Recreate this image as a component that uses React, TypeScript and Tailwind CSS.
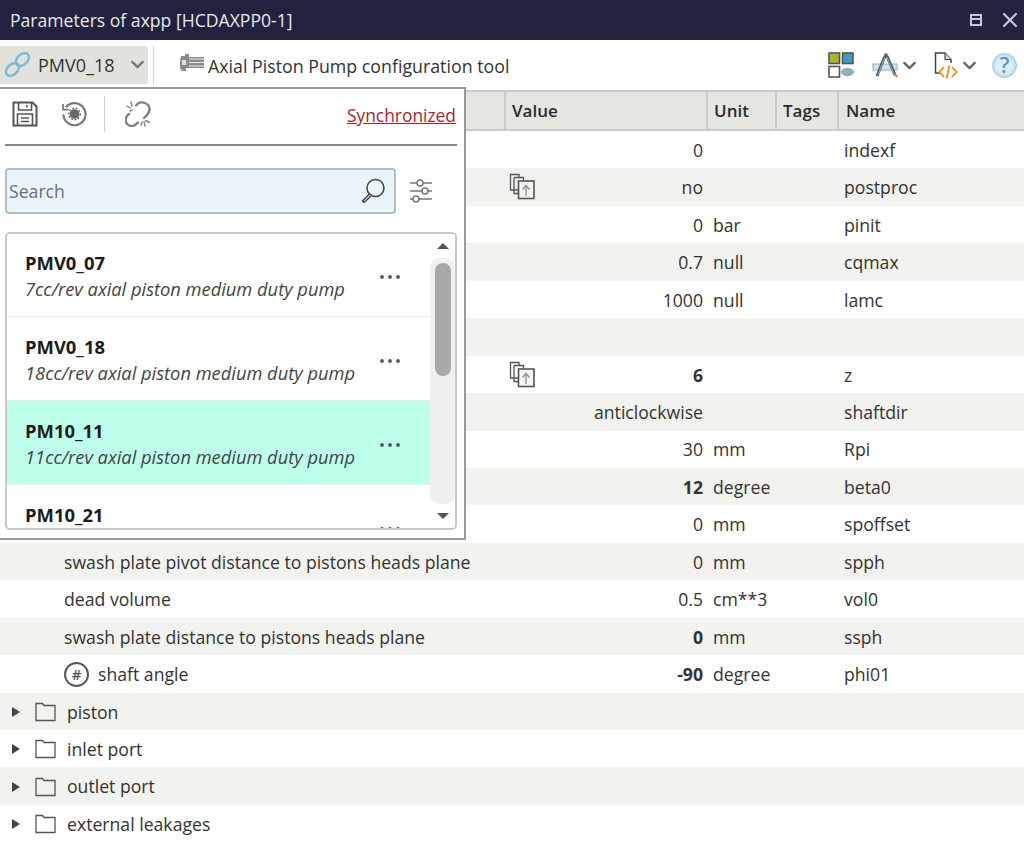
import React from "react";
import { ChevronDown, X } from "lucide-react";

const F = "font-['Open_Sans','Noto_Sans',sans-serif]";

type R = { label?: string; indent?: boolean; folder?: boolean; hash?: boolean; value?: string; bold?: boolean; unit?: string; name?: string; copy?: boolean };

const rows: R[] = [
  { value: "0", name: "indexf" },
  { value: "no", name: "postproc", copy: true },
  { value: "0", unit: "bar", name: "pinit" },
  { value: "0.7", unit: "null", name: "cqmax" },
  { value: "1000", unit: "null", name: "lamc" },
  {},
  { value: "6", bold: true, name: "z", copy: true },
  { value: "anticlockwise", name: "shaftdir" },
  { value: "30", unit: "mm", name: "Rpi" },
  { value: "12", bold: true, unit: "degree", name: "beta0" },
  { value: "0", unit: "mm", name: "spoffset" },
  { label: "swash plate pivot distance to pistons heads plane", indent: true, value: "0", unit: "mm", name: "spph" },
  { label: "dead volume", indent: true, value: "0.5", unit: "cm**3", name: "vol0" },
  { label: "swash plate distance to pistons heads plane", indent: true, value: "0", bold: true, unit: "mm", name: "ssph" },
  { label: "shaft angle", hash: true, value: "-90", bold: true, unit: "degree", name: "phi01" },
  { label: "piston", folder: true },
  { label: "inlet port", folder: true },
  { label: "outlet port", folder: true },
  { label: "external leakages", folder: true },
];

const CopyIcon = () => (
  <svg width="27" height="27" viewBox="0 0 27 27" fill="none" stroke="#555" strokeWidth="1.3">
    <path d="M9 17H1.5V1.5H10V4" />
    <path d="M5 4.5H14.5V8" />
    <path d="M5 4.5V20.5H9" />
    <rect x="9.5" y="8" width="15.5" height="17.5" fill="#f4f4f2" strokeWidth="1.6" />
    <path d="M17 23V13M13.5 16.5L17 12.5L20.5 16.5" stroke="#999" strokeWidth="1.5" />
  </svg>
);

const Folder = () => (
  <svg width="21" height="20" viewBox="0 0 21 20" fill="none" stroke="#555" strokeWidth="1.3" className="shrink-0">
    <path d="M1 18.5V1.5H7.5L9 3.5H20V18.5Z" />
  </svg>
);

const Dots = () => (
  <svg width="22" height="6" viewBox="0 0 22 6" fill="#555">
    <circle cx="3" cy="3" r="1.9" /><circle cx="11" cy="3" r="1.9" /><circle cx="19" cy="3" r="1.9" />
  </svg>
);

const Head = ({ w, children }: { w: string; children?: React.ReactNode }) => (
  <div className={`${w} h-full border-r-2 border-[#c9c9d0] pl-[6px] flex items-center font-semibold text-[17px] text-[#2b2b2b]`}>{children}</div>
);

const items = [
  { t: "PMV0_07", d: "7cc/rev axial piston medium duty pump" },
  { t: "PMV0_18", d: "18cc/rev axial piston medium duty pump" },
  { t: "PM10_11", d: "11cc/rev axial piston medium duty pump", sel: true },
  { t: "PM10_21", d: "" },
];

export default function App() {
  return (
    <div className={`${F} relative w-[1024px] h-[849px] overflow-hidden bg-white text-[17.65px] text-[#333]`}>
      <div className="h-[40px] bg-[#22223f] flex items-center pl-[10px] pr-[2px] text-[#e8e8ee] text-[17.6px]">
        <span className="flex-1">Parameters of axpp [HCDAXPP0-1]</span>
        <svg width="14" height="14" viewBox="0 0 14 14" fill="none" stroke="#c8c8d4" strokeWidth="2" className="mr-[15px]">
          <rect x="2" y="2" width="10" height="10" /><path d="M2 6H12" />
        </svg>
        <X size={24} strokeWidth={2.2} className="text-[#c8c8d4]" />
      </div>

      <div className="h-[50px] flex items-center">
        <div className="w-[148px] h-[38px] bg-[#e2e2dd] rounded-r-[3px] flex items-center pl-[4px] text-[#333] -mt-[1px] shrink-0">
          <svg width="27" height="27" viewBox="0 0 27 27" fill="none" stroke="#7cbcd2" strokeWidth="2.5" className="shrink-0">
            <ellipse cx="18.5" cy="8.5" rx="7.5" ry="5.2" transform="rotate(-45 18.5 8.5)" />
            <ellipse cx="8.5" cy="18.5" rx="7.5" ry="5.2" transform="rotate(-45 8.5 18.5)" />
          </svg>
          <span className="ml-[7px] w-[88px] pt-[1px] text-[18px] shrink-0">PMV0_18</span>
          <ChevronDown size={21} strokeWidth={2.6} className="text-[#777] shrink-0 ml-[0.5px]" />
        </div>
        <div className="w-px h-[38px] bg-[#d4d4d4] ml-[5px] -mt-[1px]" />
        <svg width="27" height="20" viewBox="0 0 27 20" className="ml-[25px] -mt-[5px] shrink-0" fill="none">
          <path d="M6 3H2L1 8V15L3 18H7V15H25V4H10V1H6Z" fill="#8a8a8a" />
          <path d="M10 6H25M10 9.5H25M10 13H25" stroke="#eee" strokeWidth="1.2" />
          <rect x="3" y="7" width="4" height="5" fill="#ddd" />
        </svg>
        <span className="ml-[2px] pt-[3px] text-[#333] text-[17.8px]">Axial Piston Pump configuration tool</span>
        <div className="flex-1" />
        <svg width="26" height="26" viewBox="0 0 26 26" className="mr-[18px] shrink-0 -mt-[1px]">
          <rect x="1" y="1" width="10.5" height="10.5" fill="#adb32a" stroke="#555" strokeWidth="1.6" />
          <rect x="14.5" y="1" width="10.5" height="10.5" fill="#3f9dbb" stroke="#555" strokeWidth="1.6" />
          <rect x="1" y="14.5" width="10.5" height="10.5" fill="#fff" stroke="#555" strokeWidth="1.6" />
          <ellipse cx="19.5" cy="20" rx="6" ry="3.5" fill="#8fb3c0" stroke="#999" />
        </svg>
        <svg width="30" height="26" viewBox="0 0 30 26" fill="none" className="shrink-0">
          <rect x="1" y="12" width="24" height="6" fill="#d5e4ea" stroke="#8fb0bf" />
          <circle cx="14" cy="3" r="1.8" fill="#555" />
          <path d="M13 4L5 24" stroke="#4c5a62" strokeWidth="3" />
          <path d="M15 4L23 23" stroke="#4c5a62" strokeWidth="3" />
          <path d="M13 5L6 23M15 5L22 22" stroke="#7cbcd2" strokeWidth="1" />
          <path d="M23 22l2 3" stroke="#e67e22" strokeWidth="2.2" />
        </svg>
        <ChevronDown size={21} strokeWidth={2.6} className="text-[#666] -ml-[3px] mr-[14px] shrink-0" />
        <svg width="25" height="27" viewBox="0 0 25 27" fill="none" className="shrink-0">
          <path d="M6 21H1.5V1H11L17 7.5V11" stroke="#444" strokeWidth="1.5" />
          <path d="M11 1V7.5H17" stroke="#444" strokeWidth="1.2" fill="#ddd" />
          <path d="M10 15l-4.5 5 4.5 5M18 15l4.5 5-4.5 5M15.5 13.5l-3 13" stroke="#ef8a1d" strokeWidth="1.8" />
        </svg>
        <ChevronDown size={21} strokeWidth={2.6} className="text-[#666] ml-0 mr-[12px] shrink-0" />
        <div className="w-[25px] h-[25px] mr-[7px] rounded-full bg-[#dceef5] border border-[#9cc9dc] flex items-center justify-center text-[#4c9cc4] font-semibold text-[21px] leading-none shadow-[inset_0_0_4px_#9cc9dc] shrink-0">?</div>
      </div>

      <div className="h-[41px] flex bg-[#e6e6e1] border-y-2 border-[#c9c9d0]">
        <div className="w-[506px] border-r-2 border-[#c9c9d0]" />
        <Head w="w-[202px]">Value</Head>
        <Head w="w-[69px]">Unit</Head>
        <Head w="w-[62px]">Tags</Head>
        <div className="flex-1 pl-[7px] flex items-center font-semibold text-[17px] text-[#2b2b2b]">Name</div>
      </div>

      <div>
        {rows.map((r, i) => (
          <div key={i} className={`h-[37.45px] pt-[1px] flex items-center ${i % 2 ? "bg-[#f2f2ee]" : "bg-white"}`}>
            <div className="w-[505px] flex items-center">
              {r.folder && (
                <>
                  <span className="ml-[12px] mr-[15px] w-0 h-0 border-y-[5px] border-y-transparent border-l-[8px] border-l-[#444]" />
                  <Folder />
                  <span className="ml-[11px]">{r.label}</span>
                </>
              )}
              {r.indent && <span className="ml-[64px]">{r.label}</span>}
              {r.hash && (
                <>
                  <span className="ml-[64px] w-[25px] h-[25px] rounded-full border-2 border-[#555] flex items-center justify-center text-[15px] font-semibold text-[#555]">#</span>
                  <span className="ml-[9px]">{r.label}</span>
                </>
              )}
            </div>
            <div className={`w-[202px] relative text-right pr-[4px] ${r.bold ? "font-bold" : ""}`}>
              {r.copy && <span className="absolute left-[4px] -top-[1px]"><CopyIcon /></span>}
              {r.value}
            </div>
            <div className="w-[131px] pl-[6px]">{r.unit}</div>
            <div className="pl-[6px]">{r.name}</div>
          </div>
        ))}
      </div>

      <div className="absolute left-0 top-[87px] w-[466px] h-[453px] bg-white border-r-2 border-y-2 border-[#9a9a9a] pl-[5px] pr-[7px]">
        <div className="h-[57px] flex items-center pl-[7px] border-b-2 border-[#8a8a8a] pb-[6px]">
          <svg width="26" height="26" viewBox="0 0 26 26" fill="none" stroke="#555" strokeWidth="2" className="shrink-0">
            <path d="M1.5 1.5H20.5L24.5 5.5V24.5H1.5Z" />
            <path d="M6.5 1.5V9H19.5V1.5M15 4V6.5" strokeWidth="1.6" />
            <path d="M5.5 24.5V13H20.5V24.5M9 17H17M9 20.5H17" strokeWidth="1.6" />
          </svg>
          <svg width="26" height="26" viewBox="0 0 27 27" fill="none" className="ml-[23px] shrink-0">
            <path d="M5 6.5A11.5 11.5 0 1 1 2.5 14" stroke="#777" strokeWidth="2.2" />
            <path d="M2 3V9H8" stroke="#777" strokeWidth="1.8" />
            <circle cx="14" cy="13.5" r="5" fill="#666" />
            <circle cx="14" cy="13.5" r="6" stroke="#666" strokeWidth="1.4" strokeDasharray="2 1.6" />
          </svg>
          <div className="w-px h-[36px] bg-[#d0d0d0] ml-[17px] shrink-0" />
          <svg width="26" height="26" viewBox="0 0 26 26" fill="none" stroke="#808080" strokeWidth="2.3" strokeLinecap="round" className="ml-[20px] shrink-0">
            <path d="M11 4.5L13 2.5C17 0 25 2 24.5 9C24 13 21 15 19 17" />
            <path d="M4 13C1 15 0 18 1 21C2 25 7 26 10 24L13 21.5" />
            <path d="M6 1l1 4M2 5l3 2M5 10l2-1M20 25l-1-4M24.5 21.5l-4-2M16 24l1-3" strokeWidth="1.4" />
          </svg>
          <span className="ml-auto mr-[1px] underline text-[#a81f2e] text-[17.4px] pt-[3px]">Synchronized</span>
        </div>

        <div className="mt-[22px] flex items-center">
          <div className="w-[391px] h-[46px] bg-[#e9f5f8] border-2 border-[#b4bcc4] rounded-[4px] flex items-center pl-[2px] pr-[8px]">
            <span className="flex-1 text-[#66707f]">Search</span>
            <svg width="26" height="26" viewBox="0 0 26 26" fill="none" stroke="#444" strokeWidth="1.5">
              <circle cx="15.5" cy="10" r="8.5" />
              <path d="M9.5 16L2.5 23L4 24.5L11 18" />
            </svg>
          </div>
          <svg width="24" height="24" viewBox="0 0 24 24" fill="none" stroke="#777" strokeWidth="1.5" className="ml-[13px]">
            <path d="M1 4H23M1 12H23M1 20H23" />
            <circle cx="11" cy="4" r="3" fill="#fff" />
            <circle cx="16" cy="12" r="3" fill="#fff" />
            <circle cx="7" cy="20" r="3" fill="#fff" />
          </svg>
        </div>

        <div className="mt-[18px] h-[298px] border-2 border-[#c8c8c8] rounded-[5px] flex overflow-hidden">
          <div className="flex-1 overflow-hidden -mt-[1px]">
            {items.map((it) => (
              <div key={it.t} className={`h-[84px] shrink-0 flex items-center pl-[18px] border-b border-[#ececec] ${it.sel ? "bg-[#bdffeb]" : ""}`}>
                <div className="flex-1 mt-[2px] min-w-0">
                  <div className="font-bold text-[#1c1c1c] leading-[26px] text-[18.4px]">{it.t}</div>
                  <div className="italic text-[#444] leading-[26px] whitespace-nowrap text-[18.3px] h-[26px]">{it.d}</div>
                </div>
                <span className="mr-[29px] mt-[5px] flex"><Dots /></span>
              </div>
            ))}
          </div>
          <div className="w-[25px] relative bg-white flex flex-col items-center">
            <span className="mt-[9px] w-0 h-0 border-x-[6px] border-x-transparent border-b-[6px] border-b-[#555]" />
            <div className="mt-[9px] w-[25px] h-[246px] rounded-[10px] bg-[#f0f0f0] flex justify-center pt-[4.5px]">
              <div className="w-[16px] h-[113px] rounded-[8px] bg-[#a9a9a9]" />
            </div>
            <span className="mt-[9px] w-0 h-0 border-x-[6px] border-x-transparent border-t-[6px] border-t-[#555]" />
          </div>
        </div>
      </div>
    </div>
  );
}
